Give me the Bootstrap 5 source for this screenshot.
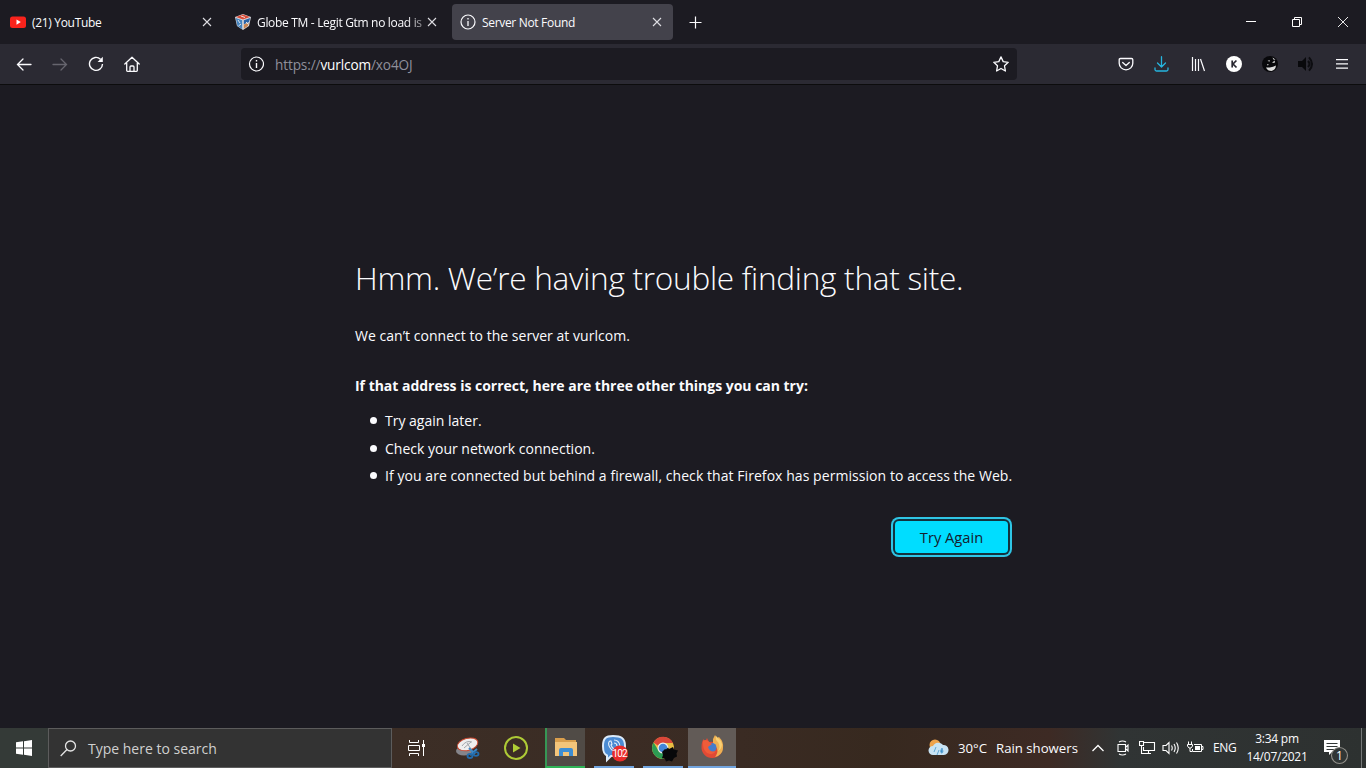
<!DOCTYPE html>
<html lang="en">
<head>
<meta charset="utf-8">
<title>Server Not Found</title>
<link href="https://cdn.jsdelivr.net/npm/bootstrap@5.3.0/dist/css/bootstrap.min.css" rel="stylesheet">
<script src="https://cdn.jsdelivr.net/npm/bootstrap@5.3.0/dist/js/bootstrap.bundle.min.js"></script>
<style>
body{width:1366px;height:768px;font-family:"Open Sans","Noto Sans",sans-serif;background:#1c1b22;color:#fbfbfe;font-size:14px}
svg{display:block;flex:none}
.strip{height:44px;font-size:12px;letter-spacing:-.32px}
.tab-item{width:221px;height:36px;margin:4px 2px 4px;padding-left:8px;border-radius:4px}
.tab-item.current{background:#43424b}
.tab-label{width:169px;margin-left:6px;padding-top:1px;line-height:36px;white-space:nowrap}
.tab-label.fade-end{-webkit-mask-image:linear-gradient(90deg,#000 88%,transparent 106%);mask-image:linear-gradient(90deg,#000 88%,transparent 106%)}
.tab-close{width:16px;margin-left:-2px}
.newtab{width:40px}
.winctl{width:46px;height:44px}
.tools{height:41px;background:#2b2a33;border-bottom:1px solid #0c0c0d;padding:0 6px}
.tool{width:36px;height:40px}
.address{width:776px;height:32px;background:#1c1b22;border-radius:4px;margin-left:91px;padding:0 8px 0 7px;color:#8f8f9b;font-size:13.6px}
.address-text{margin-left:11px;padding-top:1px;line-height:31px;letter-spacing:-.12px}
.view{height:643px;padding:170px 0 0 355px}
.view-inner{width:657px}
.view h1{font-size:31.6px;font-weight:300;line-height:46px;margin:0;white-space:nowrap;letter-spacing:-.28px}
.view p{line-height:24px;margin:0;white-space:nowrap}
.view .lead-in{margin-top:23px;letter-spacing:.03px}
.view .tips-title{margin-top:26px;letter-spacing:-.02px}
.tips{line-height:24px;padding-left:30px;margin:11px 0 0;white-space:nowrap;list-style:none}
.tips li{position:relative;margin-bottom:3.6px}
.tips li:last-child{letter-spacing:.06px}
.tips li::before{content:"";position:absolute;left:-15px;top:8px;width:7px;height:7px;border-radius:50%;background:#fbfbfe}
.retry,.retry:hover{width:113px;height:32px;padding:0;margin:29px 4px 0 0;border:0;border-radius:4px;background:#00ddff;color:#15202d;font-size:14.7px;line-height:33px;box-shadow:0 0 0 2px #12333f,0 0 0 4px #2fc5e5}
.taskbar{height:40px;background:linear-gradient(90deg,#343a37 0,#343a37 48px,#3c2e26 392px,#3a2b23 740px,#37291f 880px,#3d2a24 1050px,#303434 1120px,#2d3130 1366px)}
.start{width:48px}
.find{width:344px;height:40px;background:#333;border:1px solid #5c5c5c;padding-left:11px;color:#d0d0d0}
.find-text{margin-left:11px}
.app{height:40px}
.app.run{border-bottom:2px solid #72a5df}
.app.explorer{background:#504b46;border-color:#2fb457;border-left:2px solid #369755}
.app.active-app{background:#625b57}
.tray{font-size:12px;white-space:nowrap}
.weather{font-size:13.2px;padding-top:1px}
.clock{width:64px;line-height:18px;letter-spacing:-.25px}
.nt{width:28px;height:40px}
</style>
</head>
<body class="overflow-hidden m-0 d-flex flex-column">

<header class="strip d-flex">
  <div class="tab-item d-flex align-items-center">
    <svg width="16" height="16"><rect y="2.5" width="16" height="11.5" rx="2.5" fill="#f8231c"/><path d="M6.5 5.5v5.2l4.3-2.6z" fill="#fff"/></svg>
    <span class="tab-label">(21) YouTube</span>
    <svg class="tab-close" width="16" height="16" stroke="#dedee3" stroke-width="1.1"><path d="M4 4l8 8M12 4l-8 8"/></svg>
  </div>
  <div class="tab-item d-flex align-items-center">
    <svg width="16" height="16"><path d="M0 3l8-3 8 3-2 9-6 4-6-4z" fill="#d8d8dc"/><path d="M1 3l7-2.600L15 3 8 5.500z" fill="#d94b37"/><path d="M.8 4l6.400 2.200v9L2.500 12z" fill="#4584bf"/><path d="M15.200 4L8.800 6.200v4L14 8z" fill="#2863a7"/><path d="M8.800 10.500l4.900-1.800-.8 3.300-4.100 2.800z" fill="#c98653"/><path d="M3 6l2 3M3.500 12l2.500-2M6 2l4 1.500M11 8l2 2" stroke="#f1eeee" stroke-width=".9"/></svg>
    <span class="tab-label fade-end">Globe TM - Legit Gtm no load is</span>
    <svg class="tab-close" width="16" height="16" stroke="#dedee3" stroke-width="1.1"><path d="M4 4l8 8M12 4l-8 8"/></svg>
  </div>
  <div class="tab-item current d-flex align-items-center">
    <svg width="16" height="16" fill="none" stroke="#fbfbfe" stroke-width="1.2"><circle cx="8" cy="8" r="7"/><path d="M8 7v5M8 4v1.5" stroke-width="1.3"/></svg>
    <span class="tab-label">Server Not Found</span>
    <svg class="tab-close" width="16" height="16" stroke="#dedee3" stroke-width="1.1"><path d="M4 4l8 8M12 4l-8 8"/></svg>
  </div>
  <div class="newtab d-flex align-items-center justify-content-center"><svg width="13" height="13" stroke="#fbfbfe" stroke-width="1.2"><path d="M6.5.5v12M.5 6.5h12"/></svg></div>
  <div class="ms-auto d-flex">
    <div class="winctl d-flex align-items-center justify-content-center"><svg width="10" height="10"><path d="M0 4h10v1H0z" fill="#fff"/></svg></div>
    <div class="winctl d-flex align-items-center justify-content-center"><svg width="10" height="10" fill="none" stroke="#fff"><path d="M.5 2.5h7v7h-7zM2.5 2V.5h7v7H8"/></svg></div>
    <div class="winctl d-flex align-items-center justify-content-center"><svg width="10" height="10" stroke="#fff" stroke-width=".9"><path d="M0 0l10 10M10 0L0 10"/></svg></div>
  </div>
</header>

<nav class="tools d-flex align-items-center">
  <div class="tool d-flex align-items-center justify-content-center"><svg width="16" height="16" fill="none" stroke="#fbfbfe" stroke-width="1.3" stroke-linecap="round"><path d="M15 8.5H1.500M7 3L1.500 8.500 7 14"/></svg></div>
  <div class="tool d-flex align-items-center justify-content-center"><svg width="16" height="16" fill="none" stroke="#66656e" stroke-width="1.3" stroke-linecap="round"><path d="M1 8.500h13.500M9 3l5.500 5.500L9 14"/></svg></div>
  <div class="tool d-flex align-items-center justify-content-center"><svg width="16" height="16" fill="none" stroke="#fbfbfe" stroke-width="1.4"><path d="M12.500 3.200A6.500 6.500 0 1 0 14.500 8"/><path d="M14.800.7v5.200H9.600z" fill="#fbfbfe" stroke="none"/></svg></div>
  <div class="tool d-flex align-items-center justify-content-center"><svg width="16" height="16" fill="none" stroke="#fbfbfe" stroke-width="1.300" stroke-linejoin="round" stroke-linecap="round"><path d="M.8 8L8 1.200 15.200 8M2.700 7v7.500q0 .8.800.8h9q.8 0 .8-.8V7M6 15v-4q0-1 1-1h2q1 0 1 1v4"/></svg></div>
  <div class="address d-flex align-items-center">
    <svg width="16" height="16" fill="none" stroke="#fbfbfe" stroke-width="1.2"><circle cx="8.500" cy="8" r="7"/><path d="M8.500 7v5M8.500 4v1.500" stroke-width="1.4"/></svg>
    <span class="address-text">https://<span class="text-white">vurlcom</span>/xo4OJ</span>
    <svg class="ms-auto" width="16" height="16" fill="none" stroke="#fbfbfe" stroke-width="1.3" stroke-linejoin="round"><path d="M8 .9l2.200 4.700 5 .7-3.700 3.500.9 5.200L8 12.500 3.600 15l.9-5.200L.8 6.300l5-.7z"/></svg>
  </div>
  <div class="ms-auto d-flex">
    <div class="tool d-flex align-items-center justify-content-center"><svg width="16" height="16" fill="none" stroke="#fbfbfe" stroke-width="1.3" stroke-linecap="round" stroke-linejoin="round"><path d="M2.500 2.500h11q1.300 0 1.300 1.300v3.500a6.800 6.500 0 0 1-13.600 0V3.800q0-1.300 1.300-1.300zM4.700 6.500L8 9.500l3.300-3"/></svg></div>
    <div class="tool d-flex align-items-center justify-content-center"><svg width="16" height="16" fill="none" stroke="#26b5df" stroke-width="1.300" stroke-linecap="round" stroke-linejoin="round"><path d="M7.500.700v10M3.500 7l4 4 4-4M1 12v1.500q0 1.500 1.500 1.500h10q1.500 0 1.500-1.500V12"/></svg></div>
    <div class="tool d-flex align-items-center justify-content-center"><svg width="16" height="16" stroke="#fbfbfe" stroke-width="1.200"><path d="M2.500 1v14M5.500 3v12M8.500 3v12M10.500 3l4 12"/></svg></div>
    <div class="tool d-flex align-items-center justify-content-center"><svg width="16" height="16"><circle cx="8" cy="8" r="8" fill="#fff"/><path d="M6.200 4.500v7M10.400 4.500L7 8l3.500 3.500" fill="none" stroke="#292831" stroke-width="1.700"/></svg></div>
    <div class="tool d-flex align-items-center justify-content-center"><svg width="16" height="16"><circle cx="8" cy="8" r="8" fill="#08080b"/><path d="M4 11.500q5 .5 10-2-.500 4.500-4.500 5.500-4 0-5.500-3.500zM5.500 5l2-1 .3 1.500zM10 6.500l3-2-.5 2.500zM5 8l2 .8-1.500.6z" fill="#ddd"/><path d="M10.500 1.500l3 2.300-2-.3z" fill="#fff"/></svg></div>
    <div class="tool d-flex align-items-center justify-content-center"><svg width="18" height="16"><path d="M1 5h4l4-4v14l-4-4H1z" fill="#09090c"/><path d="M11 5q3 3 0 6M12 1.300q6 6.700 0 13.400" fill="none" stroke="#0d0d11" stroke-width="2"/></svg></div>
    <div class="tool d-flex align-items-center justify-content-center"><svg width="12" height="12" fill="#fbfbfe"><path d="M0 1h12v1.200H0zM0 5.200h12v1.200H0zM0 9.500h12v1.200H0z"/></svg></div>
  </div>
</nav>

<main class="view">
  <div class="view-inner">
    <h1>Hmm. We’re having trouble finding that site.</h1>
    <p class="lead-in">We can’t connect to the server at vurlcom.</p>
    <p class="tips-title fw-bold">If that address is correct, here are three other things you can try:</p>
    <ul class="tips">
      <li>Try again later.</li>
      <li>Check your network connection.</li>
      <li>If you are connected but behind a firewall, check that Firefox has permission to access the Web.</li>
    </ul>
    <div class="d-flex justify-content-end"><button class="btn retry">Try Again</button></div>
  </div>
</main>

<footer class="taskbar d-flex">
  <div class="start d-flex align-items-center justify-content-center"><svg width="16" height="16" fill="#fff"><path d="M0 2.300L7 1.300v6.200H0zM8 1.200L16 0v7.500H8zM0 8.500h7v6.200l-7-1zM8 8.500h8V16l-8-1.200z"/></svg></div>
  <div class="find d-flex align-items-center">
    <svg width="17" height="17" fill="none" stroke="#e4e4e4" stroke-width="1.300"><circle cx="10.500" cy="6" r="5"/><path d="M7 9.500L.7 16"/></svg>
    <span class="find-text">Type here to search</span>
  </div>
  <div class="app d-flex align-items-center justify-content-center" style="width:48px"><svg width="17" height="16" fill="none" stroke="#fff" stroke-width="1"><path d="M1.500 0v2.500h9V0M1.500 16v-2.500h9V16M.5 5.500h11v5H.5zM15.500 0v16"/><path d="M14 4h3v3h-3z" fill="#fff" stroke="none"/></svg></div>
  <div class="app d-flex align-items-center justify-content-center" style="width:55px"><svg width="25" height="24"><ellipse cx="9" cy="15" rx="8" ry="4.500" fill="#85858b"/><ellipse cx="12.500" cy="8.500" rx="10.500" ry="6" transform="rotate(-15 12 8)" fill="#eee" stroke="#c84a32"/><path d="M7 10q4-6 10-4M9 12l7-6M12 7l4 6" stroke="#a1a6ab" fill="none"/><path d="M14 12l6 6M22 13l-7 6" stroke="#3f89c8" stroke-width="2"/><ellipse cx="15" cy="20" rx="2.500" ry="2" fill="none" stroke="#236cac" stroke-width="1.800"/><ellipse cx="21" cy="18" rx="2.500" ry="1.800" fill="none" stroke="#236cac" stroke-width="1.800"/></svg></div>
  <div class="app d-flex align-items-center justify-content-center" style="width:42px"><svg width="24" height="24"><circle cx="12" cy="12" r="11" fill="none" stroke="#aeca36" stroke-width="2"/><path d="M9 7.500v9l7.500-4.500z" fill="#b0ce35"/></svg></div>
  <div class="app run explorer d-flex align-items-center justify-content-center" style="width:40px;margin-left:8px"><svg width="24" height="20"><path d="M1 1h9l2 2h10v15H1z" fill="#d99f4d"/><path d="M1 5h22v14H1z" fill="#f3c57a"/><path d="M5 19v-6q0-2 2-2h10q2 0 2 2v6h-4v-4H9v4z" fill="#3d8ed3"/></svg></div>
  <div class="app run d-flex align-items-center justify-content-center" style="width:40px;margin-left:9px">
    <svg width="30" height="28" style="margin:4px 0 0 4px"><path d="M12 1C5 1 2 3 2 11c0 6 1 8 4 9.500V25l4-4c9 .4 14-1 14-10C24 3 20 1 12 1z" fill="#4b8bd3" stroke="#dcebfa" stroke-width="2"/><path d="M9 6c-4 2 1 11 7 11l2-2-3-2-2 1q-2-1-3-4l1-1-1-3zM13 5q5 0 6 6M13 8q3 0 3 3" stroke="#e4effa" fill="none" stroke-width="1.100"/><circle cx="19" cy="18.500" r="8" fill="#ea2c2b"/><text x="19" y="22.300" text-anchor="middle" font-size="10" font-family="Roboto" textLength="15" fill="#fff">102</text></svg>
  </div>
  <div class="app run d-flex align-items-center justify-content-center" style="width:40px;margin-left:9px">
    <svg width="28" height="28" style="margin:3px 0 0 4px"><circle cx="12" cy="13" r="11" fill="#e9bd42"/><path d="M2.500 7.500A11 11 0 0 1 22 8H12a5 5 0 0 0-4.500 3z" fill="#da4739"/><path d="M2.500 7.500A11 11 0 0 0 12 24l4-7-8-.5z" fill="#2c9b53"/><circle cx="12" cy="13" r="5.500" fill="#eee"/><circle cx="12" cy="13" r="4.300" fill="#4386d8"/><path d="M11 17l3-3 1 .5 2-2 1 1.500 4-2 1 2.500 4 1-1.500 3 .5 3-3 1.500-2 3.500-3-1-3 1-1-2.500-3-1 1-3z" fill="#08080a"/></svg>
  </div>
  <div class="app run active-app d-flex align-items-center justify-content-center" style="width:48px;margin-left:5px">
    <svg width="24" height="24"><path d="M12 23A10.500 10.500 0 0 1 1.500 12c0-4 1-6 2-8l1.500 3 2-4 2 4q5-1 7 2l6 1c2 7-3 13-10 13z" fill="#e04a35"/><path d="M13 8V4l2-4 2 3 2-1q5 5 4 11c0 5-4 8-8 9 4-5 3-10-2-12z" fill="#eeb052"/><path d="M16 1q-1 4 2 6 3 5 0 9 4-2 4-7-1-4-3-5z" fill="#f9d073"/><circle cx="12" cy="12.500" r="4.500" fill="#457ccc"/><path d="M3 6q2-2 5 0l4 3-4 3q2 6 8 4-3 5-9 2-4-3-4-9z" fill="#ef5c39"/></svg>
  </div>
  <div class="tray d-flex align-items-center" style="margin-left:191px">
    <svg width="24" height="20"><circle cx="8" cy="7" r="5.500" fill="#eea34c"/><path d="M6 17a4.500 4.500 0 0 1 0-9 6 6 0 0 1 10-1 5 5 0 1 1 1 10z" fill="#c8e3f4"/><path d="M9 9l-2 5M12 12l-2 5M15 10q-2.500 4-.5 5 2.500 0 .5-5z" fill="#398cc9" stroke="#62a8d6"/></svg>
    <span class="weather" style="margin-left:7px;width:38px">30°C</span>
    <span class="weather" style="width:95px">Rain showers</span>
    <svg width="14" height="8" fill="none" stroke="#fff" stroke-width="1.300"><path d="M1.500 7L7 1.500 12.500 7"/></svg>
    <svg width="14" height="16" style="margin-left:12px" fill="none" stroke="#fff" stroke-width="1.100"><path d="M1 4.500h7.500v7H1zM9 7l2-2v6L9 9M2 2q3.500-2 7 0M2 14q3.500 2 7 0"/></svg>
    <svg width="17" height="16" style="margin-left:8px" fill="none" stroke="#fff" stroke-width="1.100"><path d="M5 2.500h10.500v8H4.500V7M.5 1.500h4v4h-4zM2.500 6v7.500H12M9.500 11v2.500"/></svg>
    <svg width="18" height="16" style="margin-left:6px" fill="none" stroke="#fff" stroke-width="1.100"><path d="M1 5.500h3l3-3v11l-3-3H1zM9.500 5.500q1.500 2.500 0 5M12 4q2.500 4 0 8M14.500 2.500q3.500 5.500 0 11"/></svg>
    <svg width="17" height="16" style="margin-left:7px" fill="none" stroke="#fff" stroke-width="1"><path d="M7 4.500h7.500v7h-9V9M15 6.500h1v3h-1M1.500 1.500v3M4.500 1.500v3M.5 4.500h5V6L4 8H2L.5 6zM3 8v3.500h2"/><path d="M8 6h5v4H8z" fill="#fff" stroke="none"/></svg>
    <span style="margin-left:9px;width:32px;letter-spacing:-.3px">ENG</span>
    <div class="clock text-center"><div>3:34 pm</div><div>14/07/2021</div></div>
    <div class="nt" style="margin-left:15px"><svg width="28" height="40"><path d="M0 12h16v12H8l-3 3v-3H0z" fill="#fff"/><path d="M2.500 15.500h11M2.500 18.500h11M2.500 21.500h8" stroke="#333837" stroke-width="1"/><circle cx="15.500" cy="27.500" r="8" fill="#313635" stroke="#92908a" stroke-width="1.100"/><text x="15.500" y="32" text-anchor="middle" font-size="12" fill="#fff">1</text></svg></div>
    <div style="height:40px;margin-left:9px;border-left:1px solid #757878"></div>
  </div>
</footer>
</body>
</html>
